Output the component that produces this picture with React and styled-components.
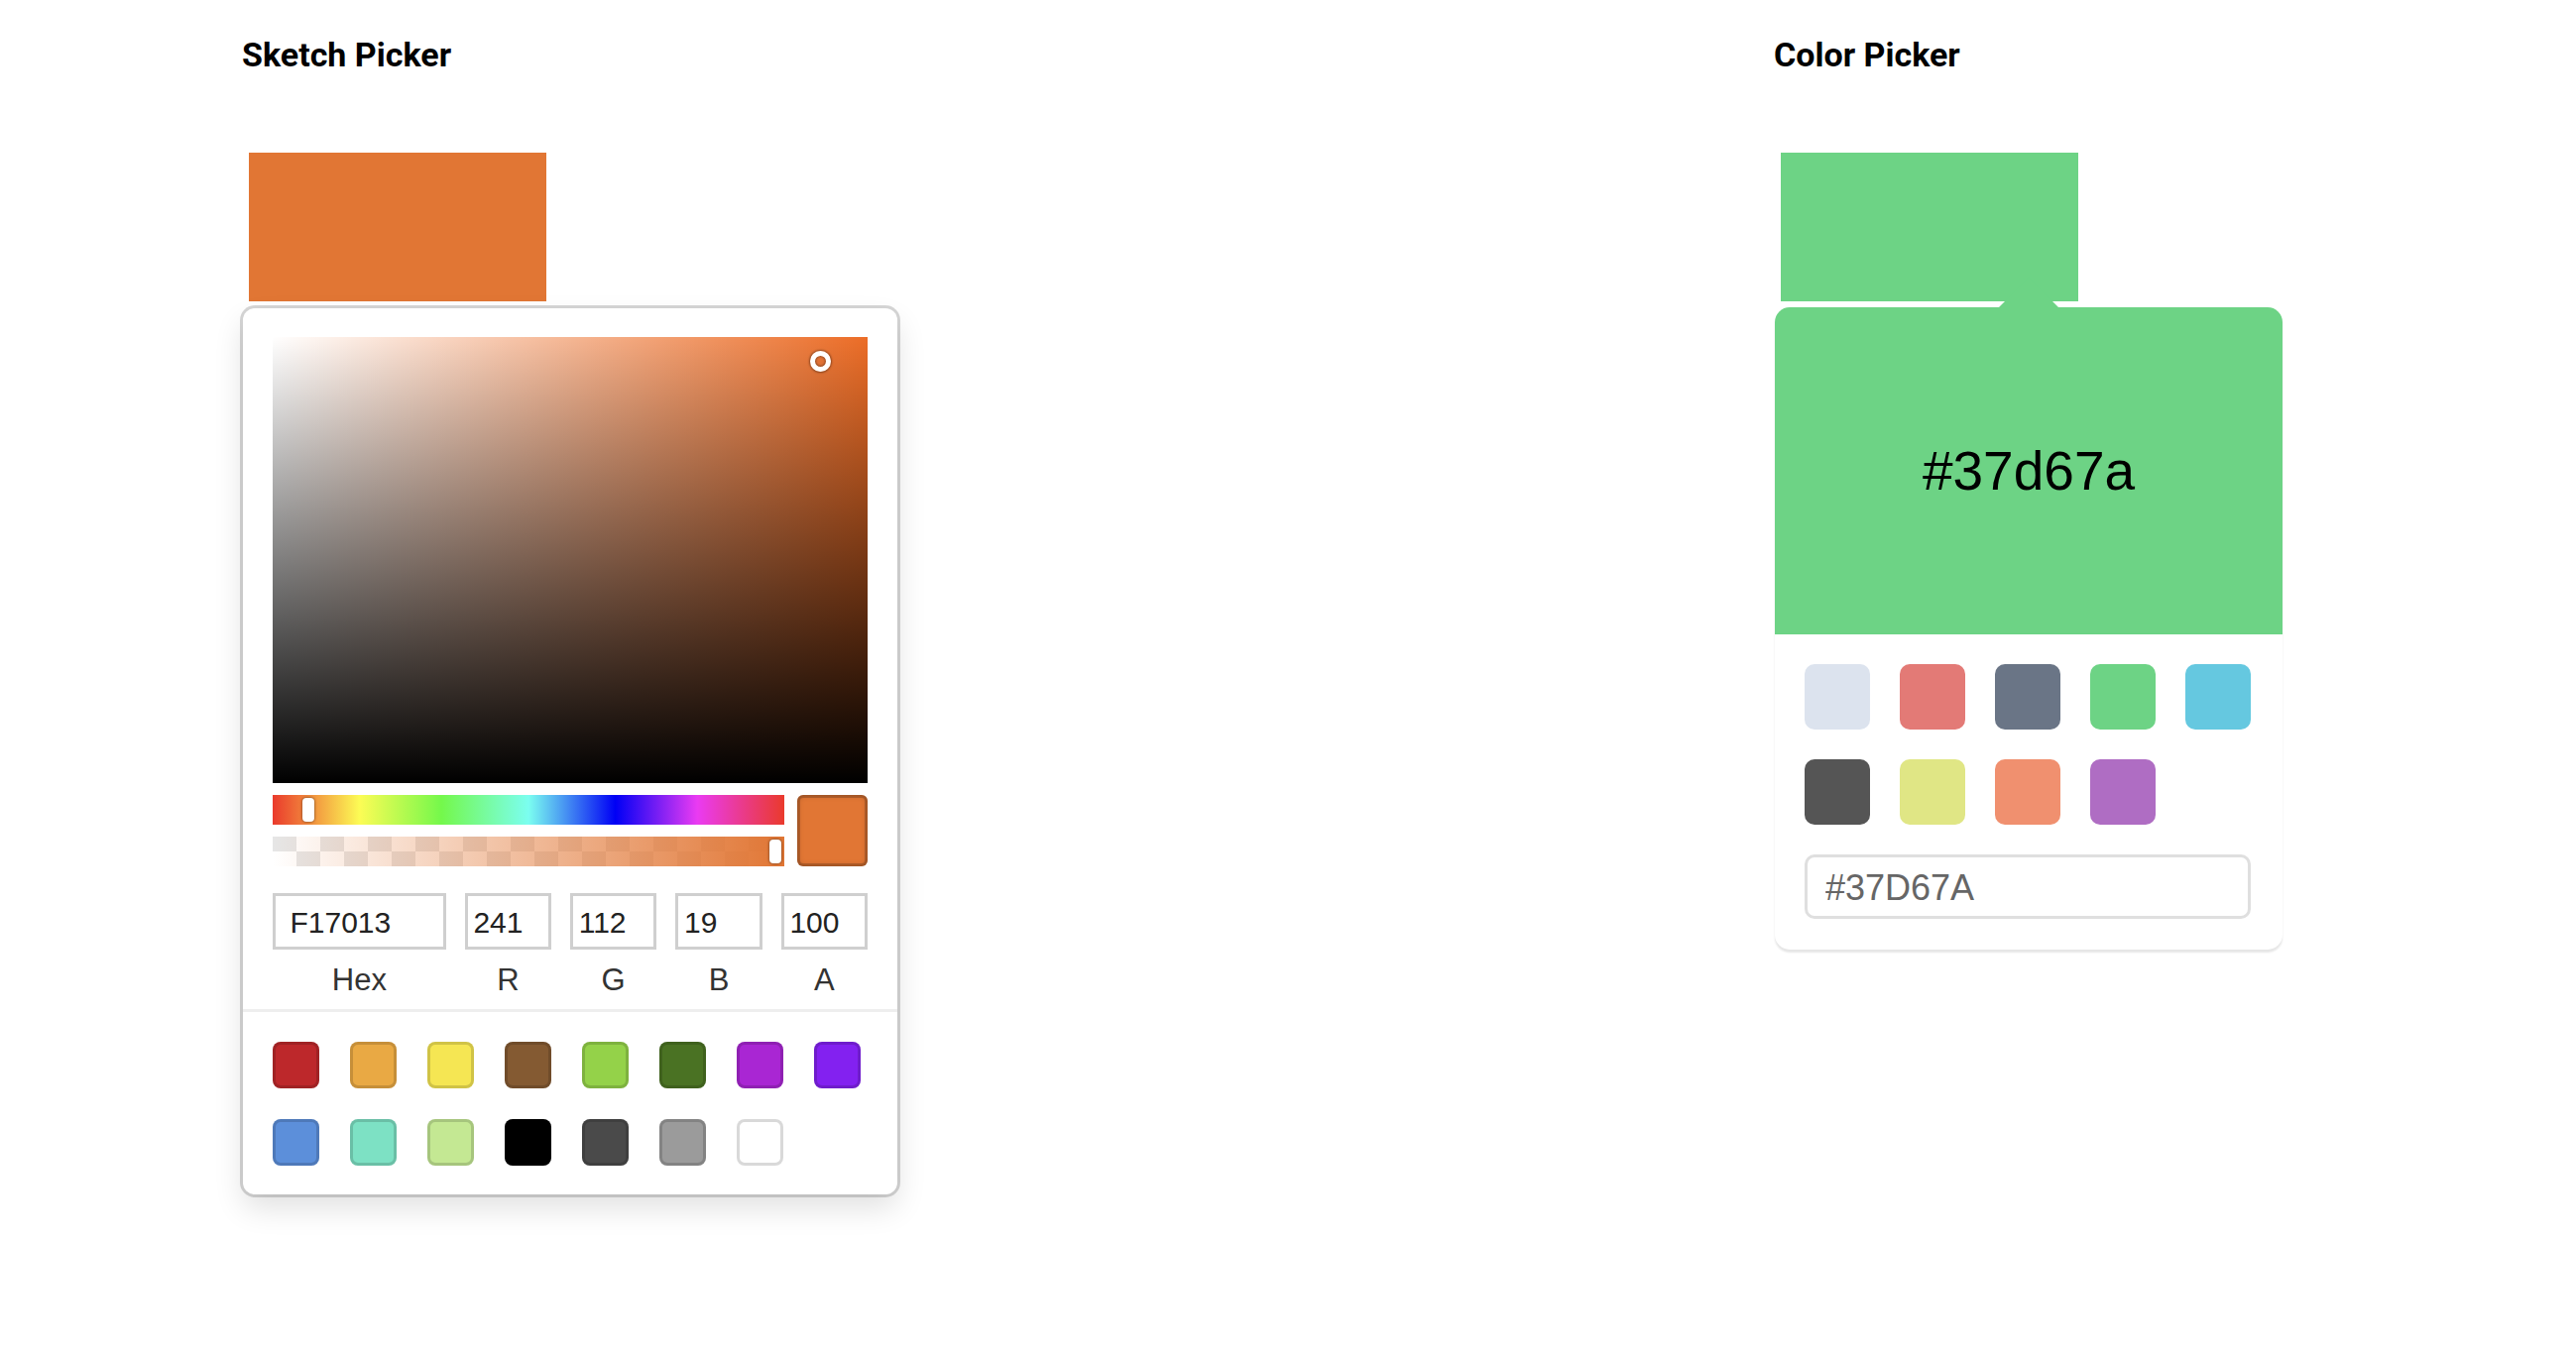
import React from 'react';
import styled, { createGlobalStyle } from 'styled-components';

const GlobalStyle = createGlobalStyle`
  html, body { margin: 0; padding: 0; background: #fff; }
  body { font-family: "Liberation Sans", Arial, sans-serif; }
  *, *::before, *::after { box-sizing: border-box; }
`;

const Page = styled.div`
  display: grid;
  grid-template-columns: 1545px 1fr;
  padding: 36px 0 0 245px;
  min-height: 1366px;
`;

const Column = styled.section`
  display: flex;
  flex-direction: column;
  align-items: flex-start;
`;

const Title = styled.h3`
  margin: 0 0 0 -1px;
  font-family: Roboto, "Liberation Sans", sans-serif;
  font-weight: 700;
  font-size: 34px;
  line-height: 38px;
  color: #000;
`;

const PreviewBox = styled.div`
  width: 300px;
  height: 150px;
  margin: 80px 0 0 6px;
  background: ${(p) => p.$color};
`;

/* ---------- Sketch picker ---------- */

const SketchPanel = styled.div`
  width: 660px;
  margin-top: 7px;
  padding: 29px 30px 0;
  background: #fff;
  border-radius: 12px;
  box-shadow: 0 0 0 3px rgba(0, 0, 0, 0.16), 0 14px 30px rgba(0, 0, 0, 0.12);
`;

const Saturation = styled.div`
  position: relative;
  height: 450px;
  background-image: linear-gradient(to top, #000, rgba(0, 0, 0, 0)),
    linear-gradient(to right, #fff, rgba(255, 255, 255, 0));
  background-color: ${(p) => p.$hue};
`;

const SatPointer = styled.div`
  position: absolute;
  width: 21px;
  height: 21px;
  margin: -10.5px 0 0 -10.5px;
  border-radius: 50%;
  border: 5px solid #fff;
  box-shadow: 0 0 2px 1px rgba(0, 0, 0, 0.35), inset 0 0 2px 1px rgba(0, 0, 0, 0.35);
`;

const ControlsRow = styled.div`
  display: flex;
  gap: 13px;
  margin-top: 12px;
`;

const Bars = styled.div`
  flex: 1;
  display: flex;
  flex-direction: column;
  gap: 12px;
`;

const HueBar = styled.div`
  position: relative;
  height: 30px;
  background: linear-gradient(
    to right,
    #ea3a2c 0%,
    #fcfc55 17%,
    #74f84b 33%,
    #7bfef0 50%,
    #0000f5 67%,
    #ea3bf2 83%,
    #ea3a2c 100%
  );
`;

const AlphaBar = styled.div`
  position: relative;
  height: 30px;
  background: linear-gradient(to right, rgba(225, 118, 52, 0), rgba(225, 118, 52, 1)),
    repeating-conic-gradient(#fff 0% 25%, #e6e6e6 0% 50%) 0 0 / 48px 30px;
`;

const SliderHandle = styled.div`
  position: absolute;
  top: 3px;
  width: 12px;
  height: 24px;
  border-radius: 4px;
  background: #fff;
  box-shadow: 0 0 3px rgba(0, 0, 0, 0.6);
`;

const ActiveSwatch = styled.div`
  width: 71px;
  height: 72px;
  border-radius: 6px;
  background: ${(p) => p.$color};
  box-shadow: inset 0 0 0 3px rgba(0, 0, 0, 0.18), inset 0 0 6px rgba(0, 0, 0, 0.25);
`;

const FieldsRow = styled.div`
  display: flex;
  gap: 19px;
  margin-top: 27px;
`;

const Field = styled.div`
  flex: ${(p) => p.$grow};
  display: flex;
  flex-direction: column;
`;

const FieldInput = styled.input`
  width: 100%;
  height: 57px;
  border: none;
  outline: none;
  padding: 2px 0 0 10%;
  font-family: "Liberation Sans", Arial, sans-serif;
  font-size: 30px;
  color: #222;
  background: #fff;
  box-shadow: inset 0 0 0 3px #cfcfcf;
`;

const FieldLabel = styled.span`
  margin-top: 14px;
  text-align: center;
  font-size: 31px;
  line-height: 34px;
  color: #333;
`;

const PresetSection = styled.div`
  display: flex;
  flex-wrap: wrap;
  gap: 31px;
  margin: 12px -30px 0;
  padding: 30px 30px 29px;
  border-top: 3px solid #eeeeee;
`;

const PresetSwatch = styled.div`
  width: 47px;
  height: 47px;
  border-radius: 8px;
  background: ${(p) => p.$color};
  box-shadow: inset 0 0 0 3px rgba(0, 0, 0, 0.15);
`;

/* ---------- Block picker ---------- */

const BlockCard = styled.div`
  width: 512px;
  margin-top: 6px;
  border-radius: 15px;
  background: #fff;
  box-shadow: 0 3px 2px rgba(0, 0, 0, 0.1);
`;

const BlockHead = styled.div`
  position: relative;
  height: 330px;
  display: flex;
  align-items: center;
  justify-content: center;
  border-radius: 15px 15px 0 0;
  background: ${(p) => p.$color};
  font-family: "Liberation Sans", Arial, sans-serif;
  font-size: 55px;
  color: #000;
`;

const Triangle = styled.div`
  position: absolute;
  top: -30px;
  left: 50%;
  margin-left: -30px;
  width: 0;
  height: 0;
  border: 30px solid transparent;
  border-top: none;
  border-bottom: 30px solid ${(p) => p.$color};
`;

const BlockBody = styled.div`
  padding: 30px 32px 31px 30px;
`;

const BlockSwatches = styled.div`
  display: flex;
  flex-wrap: wrap;
  gap: 30px;
`;

const BlockSwatch = styled.div`
  width: 66px;
  height: 66px;
  border-radius: 10px;
  background: ${(p) => p.$color};
`;

const BlockInput = styled.input`
  display: block;
  width: 100%;
  height: 65px;
  margin-top: 30px;
  padding: 3px 0 0 18px;
  border: 3px solid #dfdfdf;
  border-radius: 10px;
  outline: none;
  font-family: "Liberation Sans", Arial, sans-serif;
  font-size: 36px;
  color: #666;
  background: #fff;
`;

/* ---------- data ---------- */

const sketchColor = { r: 241, g: 112, b: 19, a: 1, hex: 'F17013' };
const orangeShown = '#e17634';
const hueShown = '#ec6d27';
const greenShown = '#6dd385';

function toHsv({ r, g, b }) {
  const max = Math.max(r, g, b);
  const min = Math.min(r, g, b);
  const d = max - min;
  let h = 0;
  if (d) {
    if (max === r) h = ((g - b) / d) % 6;
    else if (max === g) h = (b - r) / d + 2;
    else h = (r - g) / d + 4;
    h *= 60;
    if (h < 0) h += 360;
  }
  return { h, s: max ? d / max : 0, v: max / 255 };
}

const sketchPresets = [
  '#bd282b', '#e9a944', '#f5e653', '#845a32', '#94d249', '#4a7223', '#a926d3', '#8321f0',
  '#5c8fda', '#7de1c4', '#c4e893', '#000000', '#4a4a4a', '#9b9b9b', '#ffffff',
];

const blockPresets = [
  '#dce3ee', '#e37a76', '#6a7586', '#6dd385', '#65c8e0',
  '#555555', '#e0e685', '#f0906f', '#af6dc3',
];

function SketchPicker() {
  const hsv = toHsv(sketchColor);
  const huePct = (hsv.h / 360) * 100;
  const fields = [
    { label: 'Hex', value: sketchColor.hex, grow: 2 },
    { label: 'R', value: sketchColor.r, grow: 1 },
    { label: 'G', value: sketchColor.g, grow: 1 },
    { label: 'B', value: sketchColor.b, grow: 1 },
    { label: 'A', value: Math.round(sketchColor.a * 100), grow: 1 },
  ];
  return (
    <SketchPanel>
      <Saturation $hue={hueShown}>
        <SatPointer style={{ left: `${hsv.s * 100}%`, top: `${(1 - hsv.v) * 100}%` }} />
      </Saturation>
      <ControlsRow>
        <Bars>
          <HueBar>
            <SliderHandle style={{ left: `calc(${huePct}% - 6px)` }} />
          </HueBar>
          <AlphaBar>
            <SliderHandle style={{ left: `calc(${sketchColor.a * 100}% - 15px)` }} />
          </AlphaBar>
        </Bars>
        <ActiveSwatch $color={orangeShown} />
      </ControlsRow>
      <FieldsRow>
        {fields.map((f) => (
          <Field key={f.label} $grow={f.grow}>
            <FieldInput defaultValue={f.value} />
            <FieldLabel>{f.label}</FieldLabel>
          </Field>
        ))}
      </FieldsRow>
      <PresetSection>
        {sketchPresets.map((c) => (
          <PresetSwatch key={c} $color={c} />
        ))}
      </PresetSection>
    </SketchPanel>
  );
}

function BlockPicker() {
  return (
    <BlockCard>
      <BlockHead $color={greenShown}>
        <Triangle $color={greenShown} />
        #37d67a
      </BlockHead>
      <BlockBody>
        <BlockSwatches>
          {blockPresets.map((c) => (
            <BlockSwatch key={c} $color={c} />
          ))}
        </BlockSwatches>
        <BlockInput defaultValue="#37D67A" />
      </BlockBody>
    </BlockCard>
  );
}

export default function App() {
  return (
    <>
      <GlobalStyle />
      <Page>
        <Column>
          <Title>Sketch Picker</Title>
          <PreviewBox $color={orangeShown} />
          <SketchPicker />
        </Column>
        <Column>
          <Title>Color Picker</Title>
          <PreviewBox $color={greenShown} />
          <BlockPicker />
        </Column>
      </Page>
    </>
  );
}
